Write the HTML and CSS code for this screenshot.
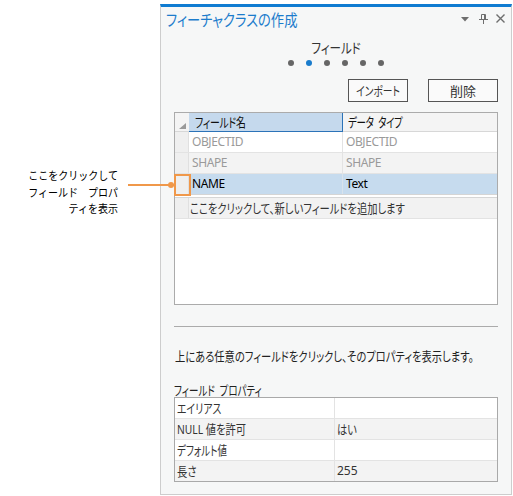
FILE: index.html
```html
<!DOCTYPE html>
<html lang="ja">
<head>
<meta charset="utf-8">
<title>フィーチャクラスの作成</title>
<link rel="stylesheet" href="styles.css">
</head>
<body>
<div class="note">ここをクリックして<br>フィールド　プロパ<br>ティを表示</div>
<div class="leader"><span class="leader-dot"></span></div>

<div class="panel">
  <div class="pane-head">
    <span class="pane-title"><span class="jt t-title">フィーチャクラスの作成</span></span>
    <span class="pane-tools">
      <svg class="ico-menu" width="8" height="5" viewBox="0 0 8 5"><path d="M0 0H8L4 4.5Z" fill="#6e6e6e"/></svg>
      <svg class="ico-pin" width="9" height="10" viewBox="0 0 9 10"><path d="M2.5 0.5H6.5V5.5H2.5Z M0 5.5H9 M4.5 5.5V10" stroke="#6e6e6e" fill="none"/><path d="M5.5 0.5V5.5" stroke="#6e6e6e"/></svg>
      <svg class="ico-close" width="9" height="9" viewBox="0 0 9 9"><path d="M0.5 0.5L8.5 8.5M8.5 0.5L0.5 8.5" stroke="#6e6e6e" stroke-width="1.4"/></svg>
    </span>
  </div>

  <div class="step-title"><span class="jt t-step">フィールド</span></div>
  <div class="dots">
    <span class="dot"></span><span class="dot dot-on"></span><span class="dot"></span><span class="dot"></span><span class="dot"></span><span class="dot"></span>
  </div>

  <div class="actions">
    <button class="btn btn-import"><span class="jt t-btn">インポート</span></button>
    <button class="btn btn-delete">削除</button>
  </div>

  <div class="fields">
    <div class="frow fhead">
      <div class="gut"><svg width="7" height="6" viewBox="0 0 7 6"><path d="M7 0V6H0Z" fill="#9a9a9a"/></svg></div>
      <div class="c1 c1-sel"><span class="jt k">フィールド名</span></div>
      <div class="c2 c2-head"><span class="jt k2">データ&#8194;タイプ</span></div>
    </div>
    <div class="frow dim">
      <div class="gut"></div><div class="c1">OBJECTID</div><div class="c2">OBJECTID</div>
    </div>
    <div class="frow dim alt">
      <div class="gut"></div><div class="c1">SHAPE</div><div class="c2">SHAPE</div>
    </div>
    <div class="frow selrow">
      <div class="gut"></div><div class="c1">NAME</div><div class="c2">Text</div>
    </div>
    <div class="frow newrow">
      <div class="gut"></div><div class="cnew"><span class="jt m">ここをクリックして、新しいフィールドを追加します</span></div>
    </div>
    <div class="marker"></div>
  </div>

  <div class="divider"></div>

  <p class="desc"><span class="jt m">上にある任意のフィールドをクリックし、そのプロパティを表示します。</span></p>

  <div class="props-label"><span class="jt k2">フィールド&#8194;プロパティ</span></div>
  <div class="props">
    <div class="prow"><div class="pk"><span class="jt k">エイリアス</span></div><div class="pv"></div></div>
    <div class="prow alt"><div class="pk"><span class="jt m">NULL 値を許可</span></div><div class="pv"><span class="jt m">はい</span></div></div>
    <div class="prow"><div class="pk"><span class="jt k2">デフォルト値</span></div><div class="pv"></div></div>
    <div class="prow alt"><div class="pk"><span class="jt m">長さ</span></div><div class="pv">255</div></div>
  </div>
</div>
</body>
</html>
```
FILE: styles.css
```css
* { box-sizing: border-box; }

html, body {
  margin: 0;
  padding: 0;
  background: #ffffff;
}

body {
  width: 513px;
  height: 496px;
  overflow: hidden;
  font-family: "Noto Sans", "Noto Sans CJK JP", sans-serif;
  font-feature-settings: "palt";
  font-size: 12px;
  color: #222;
  padding-top: 4px;
}

/* condensed Japanese run (UI font is narrower than Noto) */
.jt {
  display: inline-block;
  white-space: nowrap;
  font-size: 13px;
  transform: scaleX(var(--sx, 0.78));
  transform-origin: left center;
}

.k  { --sx: 0.76; }
.k2 { --sx: 0.73; }
.m  { --sx: 0.79; }

/* annotation callout */
.note {
  position: absolute;
  left: 0;
  top: 167px;
  width: 118px;
  text-align: right;
  font-family: "Noto Sans CJK JP", sans-serif;
  font-feature-settings: normal;
  font-size: 11.5px;
  line-height: 16.7px;
  color: #000;
  transform: scaleX(0.87);
  transform-origin: right top;
}

.leader {
  position: absolute;
  left: 128px;
  top: 184px;
  width: 46px;
  height: 2px;
  background: #f0984a;
}

.leader-dot {
  position: absolute;
  right: 0;
  top: -2px;
  width: 6px;
  height: 6px;
  border-radius: 50%;
  background: #f0984a;
}

/* dockable pane */
.panel {
  margin-left: 160px;
  width: 352px;
  height: 491px;
  border: 1px solid #cdcdcd;
  border-top: 3px solid #0f7bd1;
  background: #f6f7f7;
  padding: 0 13px;
  overflow: hidden;
}

.pane-head {
  display: flex;
  align-items: center;
  height: 23px;
  margin: 0 -13px;
  padding: 0 6px 0 5px;
}

.pane-title {
  flex: 1;
  color: #1c7ccc;
  font-family: "Noto Sans CJK JP", sans-serif;
}

.t-title {
  font-size: 16px;
  --sx: 0.83;
}

.pane-tools {
  display: flex;
  align-items: center;
  gap: 8px;
}

.ico-menu { margin-top: 2px; margin-right: 2px; }

.step-title {
  margin-top: 7px;
  height: 20px;
  line-height: 20px;
  text-align: center;
  color: #333;
  font-family: "Noto Sans CJK JP", sans-serif;
}

.t-step {
  font-size: 14px;
  --sx: 0.82;
  transform-origin: center center;
}

.dots {
  margin-top: 3px;
  display: flex;
  justify-content: center;
  gap: 12px;
  height: 6px;
}

.dot {
  width: 6px;
  height: 6px;
  border-radius: 50%;
  background: #666;
}

.dot-on { background: #1a7ccc; }

.actions {
  margin-top: 13px;
  display: flex;
  justify-content: flex-end;
  gap: 20px;
  height: 23px;
}

.btn {
  height: 23px;
  padding: 0;
  border: 1px solid #555;
  background: #fafafa;
  font: inherit;
  font-size: 13px;
  color: #333;
}

.t-btn {
  font-size: 12.5px;
  --sx: 0.78;
  transform-origin: center center;
}

.btn-import { width: 60px; }
.btn-delete { width: 70px; }

/* field grid */
.fields {
  position: relative;
  margin-top: 10px;
  height: 193px;
  border: 1px solid #ababab;
  background: #fff;
}

.frow {
  display: flex;
  height: 21px;
  border-bottom: 1px solid #e3e3e3;
  line-height: 20px;
}

.gut {
  width: 14px;
  flex: none;
  background: #efefef;
  border-right: 1px solid #e0e0e0;
  position: relative;
}

.c1 {
  width: 154px;
  flex: none;
  padding-left: 3px;
  border-right: 1px solid #e3e3e3;
  white-space: nowrap;
  letter-spacing: -0.4px;
}

.c2 {
  flex: 1;
  padding-left: 3px;
  white-space: nowrap;
  letter-spacing: -0.4px;
}

.fhead {
  height: 19px;
  line-height: 18px;
  border-bottom: 1px solid #d7d7d7;
  background: #f4f4f4;
  color: #111;
}

.fhead .gut {
  background: #f4f4f4;
  border-right: none;
}

.fhead .gut svg {
  position: absolute;
  left: 4px;
  top: 10px;
}

.c1-sel {
  background: #c5d9ed;
  padding-left: 6px;
  border-right: 1px solid #2c73b8;
  box-shadow: inset 0 -1px 0 #2c73b8;
  margin-bottom: -1px;
}

.c2-head { padding-left: 5px; }

.dim { color: #9a9a9a; }
.alt { background: #f3f3f3; }

.selrow {
  background: #c6dbee;
  color: #000;
  border-bottom: 1px solid #d5d5d5;
}

.selrow .c1 { border-right-color: #d9e3ec; }

.newrow {
  margin-top: 2px;
  border-top: 1px solid #d6d6d6;
  background: #f2f2f2;
  height: 22px;
}

.cnew {
  flex: 1;
  padding-left: 1px;
  color: #333;
}

.marker {
  position: absolute;
  left: -1px;
  top: 61px;
  width: 17px;
  height: 22px;
  border: 2px solid #f0984a;
}

.divider {
  margin-top: 21px;
  height: 1px;
  background: #ababab;
}

.desc {
  margin: 21px 0 0 1px;
  line-height: 16px;
  height: 16px;
  color: #222;
}

.props-label {
  margin-top: 19px;
  line-height: 14px;
  height: 14px;
  color: #222;
}

.props {
  border: 1px solid #a9a9a9;
  background: #fff;
}

.prow {
  display: flex;
  height: 21px;
  line-height: 20px;
  border-bottom: 1px solid #e3e3e3;
  color: #333;
}

.prow:last-child { border-bottom: none; height: 20px; }

.pk {
  width: 160px;
  flex: none;
  padding-left: 2px;
  border-right: 1px solid #e3e3e3;
}

.pv {
  flex: 1;
  padding-left: 2px;
}
```
